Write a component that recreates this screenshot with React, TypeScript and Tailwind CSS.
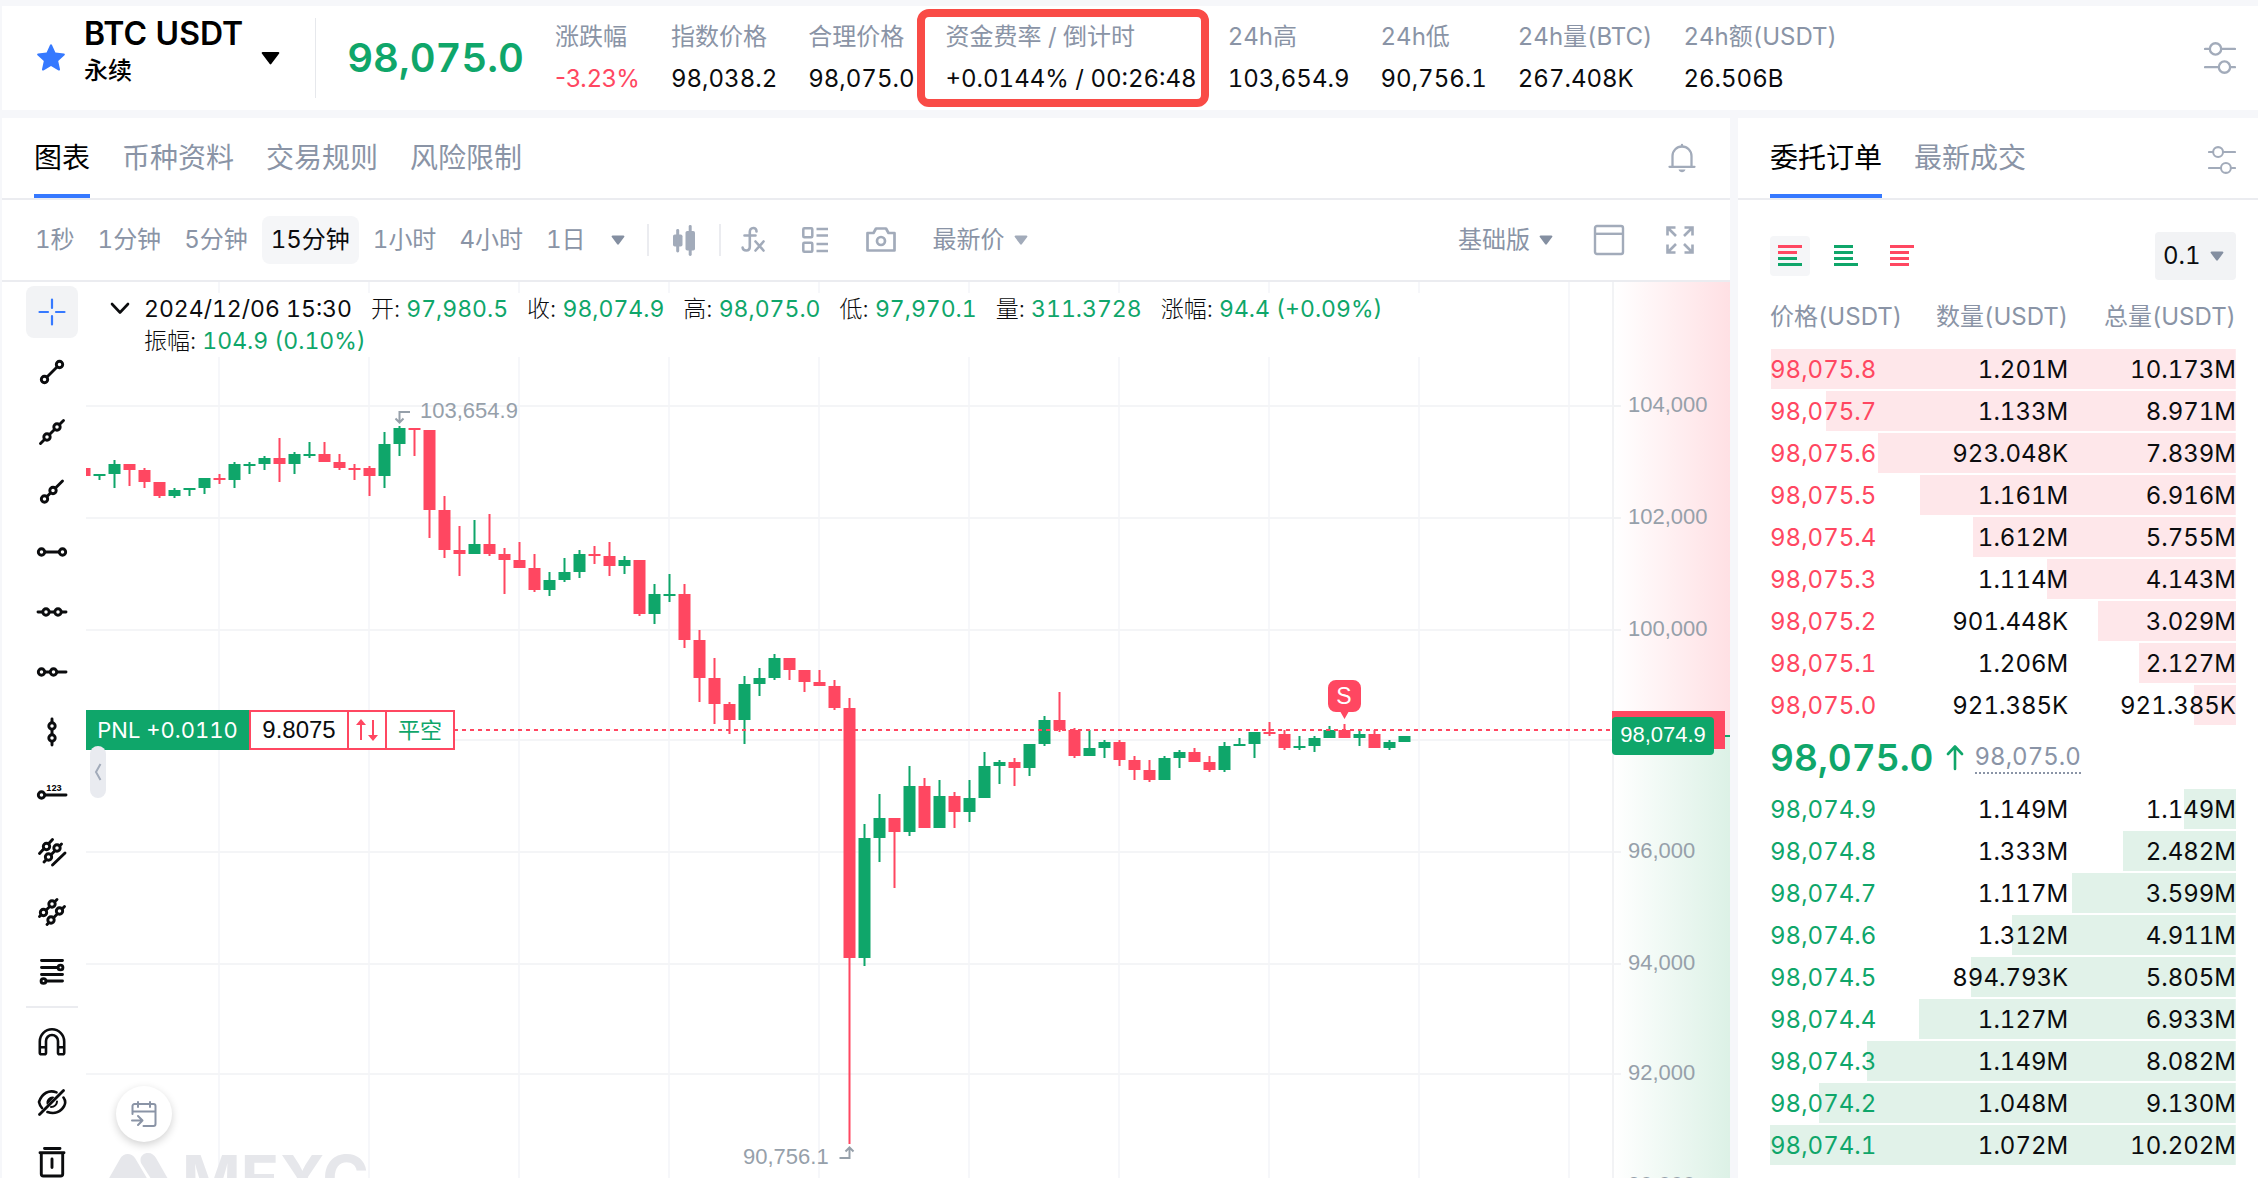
import React from "react";

type Candle = [number, number, number, number, number];

/* [up, high, bodyTop, bodyBottom, low] in chart pixels measured from the top of the window */
const CANDLES: Candle[] = [
  [0, 468, 468, 476, 476], [1, 474, 474, 476, 480], [1, 460, 464, 474, 488], [0, 464, 464, 470, 486],
  [0, 468, 470, 482, 488], [0, 482, 482, 496, 498], [1, 488, 490, 496, 498], [1, 488, 488, 490, 496],
  [1, 478, 478, 488, 494], [0, 474, 478, 480, 484], [1, 462, 464, 480, 488], [1, 462, 464, 466, 474],
  [1, 456, 458, 464, 470], [0, 438, 458, 464, 482], [1, 452, 454, 464, 474], [1, 442, 454, 456, 458],
  [0, 442, 454, 462, 462], [0, 454, 462, 468, 470], [0, 464, 468, 470, 480], [0, 466, 468, 476, 496],
  [1, 432, 444, 476, 488], [1, 426, 428, 444, 456], [0, 428, 428, 430, 456], [0, 430, 430, 510, 538],
  [0, 496, 510, 550, 558], [0, 526, 550, 554, 576], [1, 520, 544, 554, 554], [0, 514, 544, 554, 556],
  [0, 548, 554, 560, 594], [0, 542, 560, 568, 568], [0, 554, 568, 590, 592], [1, 572, 580, 590, 596],
  [1, 558, 572, 580, 582], [1, 550, 554, 572, 578], [0, 546, 554, 556, 564], [0, 542, 556, 566, 576],
  [1, 556, 560, 566, 574], [0, 560, 560, 614, 616], [1, 584, 594, 614, 624], [1, 574, 594, 596, 602],
  [0, 584, 594, 640, 648], [0, 630, 640, 678, 702], [0, 658, 678, 704, 724], [0, 702, 704, 720, 734],
  [1, 676, 684, 720, 744], [1, 668, 678, 684, 696], [1, 654, 658, 678, 680], [0, 658, 658, 670, 680],
  [0, 670, 670, 682, 692], [0, 670, 682, 686, 686], [0, 680, 686, 708, 710], [0, 698, 708, 958, 1144],
  [1, 824, 838, 958, 966], [1, 794, 818, 838, 862], [0, 818, 818, 832, 888], [1, 766, 786, 832, 836],
  [0, 778, 786, 828, 828], [1, 780, 796, 828, 828], [0, 792, 796, 812, 828], [1, 780, 798, 812, 822],
  [1, 752, 766, 798, 798], [1, 760, 762, 766, 784], [0, 758, 762, 768, 786], [1, 744, 744, 768, 776],
  [1, 716, 720, 744, 746], [0, 692, 720, 730, 732], [0, 728, 730, 756, 758], [1, 730, 748, 756, 756],
  [1, 740, 742, 748, 758], [0, 740, 742, 760, 766], [0, 756, 760, 770, 780], [0, 760, 770, 780, 782],
  [1, 756, 758, 780, 780], [1, 750, 752, 758, 768], [0, 748, 752, 762, 762], [0, 756, 762, 770, 772],
  [1, 742, 746, 770, 772], [1, 738, 744, 746, 746], [1, 732, 732, 744, 758], [0, 722, 732, 734, 736],
  [0, 730, 734, 748, 750], [1, 736, 746, 748, 750], [1, 736, 738, 746, 752], [1, 726, 730, 738, 738],
  [0, 724, 730, 738, 738], [1, 730, 734, 738, 746], [0, 730, 734, 748, 748], [1, 740, 742, 748, 750],
  [1, 736, 736, 742, 742],
];

const GRID_X = [219, 369, 519, 669, 819, 969, 1119, 1269, 1419, 1569];
const GRID_Y: [number, string][] = [
  [406, "104,000"], [518, "102,000"], [630, "100,000"], [740, ""],
  [852, "96,000"], [964, "94,000"], [1074, "92,000"], [1186, "90,000"],
];

const UP = "#0fa66a";
const DOWN = "#ff4761";

const STATS: { label: string; value: string; tone?: string; marked?: boolean }[] = [
  { label: "涨跌幅", value: "-3.23%", tone: "text-[#ff4761] proportional-nums" },
  { label: "指数价格", value: "98,038.2" },
  { label: "合理价格", value: "98,075.0" },
  { label: "资金费率 / 倒计时", value: "+0.0144% / 00:26:48", marked: true },
  { label: "24h高", value: "103,654.9" },
  { label: "24h低", value: "90,756.1" },
  { label: "24h量(BTC)", value: "267.408K" },
  { label: "24h额(USDT)", value: "26.506B" },
];

const ASKS = [
  ["98,075.8", "1.201M", "10.173M", 10.173],
  ["98,075.7", "1.133M", "8.971M", 8.971],
  ["98,075.6", "923.048K", "7.839M", 7.839],
  ["98,075.5", "1.161M", "6.916M", 6.916],
  ["98,075.4", "1.612M", "5.755M", 5.755],
  ["98,075.3", "1.114M", "4.143M", 4.143],
  ["98,075.2", "901.448K", "3.029M", 3.029],
  ["98,075.1", "1.206M", "2.127M", 2.127],
  ["98,075.0", "921.385K", "921.385K", 0.921],
] as const;

const BIDS = [
  ["98,074.9", "1.149M", "1.149M", 1.149],
  ["98,074.8", "1.333M", "2.482M", 2.482],
  ["98,074.7", "1.117M", "3.599M", 3.599],
  ["98,074.6", "1.312M", "4.911M", 4.911],
  ["98,074.5", "894.793K", "5.805M", 5.805],
  ["98,074.4", "1.127M", "6.933M", 6.933],
  ["98,074.3", "1.149M", "8.082M", 8.082],
  ["98,074.2", "1.048M", "9.130M", 9.13],
  ["98,074.1", "1.072M", "10.202M", 10.202],
] as const;

const MAX_TOTAL = 10.202;

function Caret({ className = "" }: { className?: string }) {
  return (
    <svg viewBox="0 0 14 10" aria-hidden="true" className={`h-[10px] w-[14px] ${className}`}>
      <path d="M1.6 0.5h10.8a1 1 0 0 1 .8 1.6L8 9a1.2 1.2 0 0 1-2 0L.8 2.1a1 1 0 0 1 .8-1.6z" fill="currentColor" />
    </svg>
  );
}

function Sliders({ className }: { className: string }) {
  return (
    <svg viewBox="0 0 30 30" aria-hidden="true" className={className} fill="none" stroke="currentColor" strokeWidth="2.2" strokeLinecap="round">
      <path d="M1 6.5h4M16.500 6.500H29M1 23.500h12.500M25 23.500h4" />
      <circle cx="10.800" cy="6.500" r="5.300" />
      <circle cx="19.200" cy="23.500" r="5.300" />
    </svg>
  );
}

function Header() {
  return (
    <header className="flex h-[104px] shrink-0 items-center bg-white pr-[22px] pl-[34px]">
      <button type="button" aria-label="收藏" className="text-[#3679ff]">
        <svg viewBox="0 0 30 30" className="size-[30px]" aria-hidden="true">
          <path d="M15 1.200c.5 0 .8.3 1 .7l3.400 7.600 8.500.9c1 .1 1.300 1.100.6 1.800l-6.300 5.700 1.800 8.400c.2.900-.7 1.500-1.500 1.100L15 23.100l-7.500 4.300c-.8.4-1.700-.2-1.500-1.100l1.800-8.400-6.300-5.700c-.7-.7-.4-1.700.6-1.800l8.500-.9L14 1.900c.2-.4.5-.7 1-.7z" fill="currentColor" />
        </svg>
      </button>
      <button type="button" className="ml-[18px] flex items-center text-left text-black">
        <span className="flex flex-col pb-3.5">
          <span className="text-[32px] leading-[40px] font-semibold">BTC USDT</span>
          <span className="text-[24px] leading-[34px] font-medium">永续</span>
        </span>
        <svg viewBox="0 0 20 14" className="ml-[18px] h-[13px] w-[19px]" aria-hidden="true">
          <path d="M1.500 0h17a1 1 0 0 1 .8 1.600L10.800 13a1 1 0 0 1-1.600 0L.7 1.600A1 1 0 0 1 1.500 0z" fill="currentColor" />
        </svg>
      </button>
      <div className="ml-[35px] h-20 w-px bg-[#e6e8ec]" />
      <div className="ml-[31px] text-[40px] leading-[48px] font-semibold text-[#0fa66a]">98,075.0</div>
      <dl className="ml-[31px] flex flex-1 gap-[31px]">
        {STATS.map((s) => (
          <div key={s.label} className="relative flex flex-col text-[24px] leading-[32px] whitespace-nowrap">
            <dt className="text-[#8a94a6]">{s.label}</dt>
            <dd className={`mt-[10px] ${s.tone ?? "text-[#0b0c0e]"}`}>{s.value}</dd>
            {s.marked && (
              <span className="pointer-events-none absolute -inset-y-[12px] right-[-12px] left-[-28px] rounded-xl border-8 border-[#f94b46]" />
            )}
          </div>
        ))}
      </dl>
      <button type="button" aria-label="设置" className="text-[#a2abba]">
        <Sliders className="size-[32px]" />
      </button>
    </header>
  );
}

function Tab({ active, children }: { active?: boolean; children: React.ReactNode }) {
  return (
    <button
      type="button"
      role="tab"
      aria-selected={!!active}
      className={`h-20 border-b-4 pt-[3px] text-[28px] ${active ? "border-[#3679ff] text-black" : "border-transparent text-[#8a94a6]"}`}
    >
      {children}
    </button>
  );
}

const PERIODS = ["1秒", "1分钟", "5分钟", "15分钟", "1小时", "4小时", "1日"];

function Toolbar() {
  return (
    <div className="flex h-[82px] shrink-0 items-center border-b-2 border-[#ebecf0] pr-[35px] pl-[24px] text-[24px] text-[#8a94a6]">
      <div className="flex items-center gap-[5px]">
        {PERIODS.map((p) => (
          <button
            key={p}
            type="button"
            className={`h-12 rounded-lg px-[9px] ${p === "15分钟" ? "bg-[#f5f6f8] text-[#0b0c0e]" : ""}`}
          >
            {p}
          </button>
        ))}
      </div>
      <button type="button" aria-label="更多周期" className="ml-4 flex text-[#848fa1]">
        <Caret />
      </button>
      <div className="ml-[22px] h-8 w-[2px] bg-[#ebecf0]" />
      <button type="button" aria-label="K线样式" className="ml-6 text-[#a2abba]">
        <svg viewBox="0 0 22 32" className="h-8 w-[22px]" aria-hidden="true" fill="currentColor">
          <rect x="0" y="10.500" width="9.500" height="12" rx="1.800" />
          <rect x="3.200" y="5" width="3" height="23.500" rx="1.400" />
          <rect x="12.500" y="7" width="9.500" height="19.500" rx="1.800" />
          <rect x="15.700" y="1" width="3" height="31" rx="1.400" />
        </svg>
      </button>
      <div className="ml-6 h-8 w-[2px] bg-[#ebecf0]" />
      <button type="button" aria-label="指标" className="ml-5 text-[#a2abba]">
        <svg viewBox="0 0 24 28" className="h-7 w-6" aria-hidden="true" fill="none" stroke="currentColor" strokeWidth="2.600" strokeLinecap="round" strokeLinejoin="round">
          <path d="M15.500 5.500C15.500 3.200 14.300 2 12.300 2 10 2 8.800 3.500 8.800 6v14.500c0 2.500-1.200 4-3.500 4S1.800 23.300 1.600 21.600M3.500 9.500h11" />
          <path d="M14.500 15.500l8 9M22.500 15.500l-8 9" />
        </svg>
      </button>
      <button type="button" aria-label="布局" className="ml-9 text-[#a2abba]">
        <svg viewBox="0 0 28 28" className="size-7" aria-hidden="true" fill="none" stroke="currentColor" strokeWidth="2.500">
          <rect x="2.300" y="2.300" width="9" height="9" rx="1" />
          <rect x="2.300" y="16.700" width="9" height="9" rx="1" />
          <path d="M15.500 3H27M15.500 9.500H27M15.500 18H27M15.500 25H27" />
        </svg>
      </button>
      <button type="button" aria-label="截图" className="ml-9 text-[#a2abba]">
        <svg viewBox="0 0 32 28" className="h-7 w-8" aria-hidden="true" fill="none" stroke="currentColor" strokeWidth="2.700" strokeLinejoin="round">
          <path d="M2.500 7h6l2.500-4.500h10L23.500 7h6v17.500h-27z" />
          <circle cx="16" cy="15" r="4" />
        </svg>
      </button>
      <button type="button" className="ml-9 flex items-center gap-[9px]">
        最新价 <Caret className="text-[#a2abba]" />
      </button>
      <button type="button" className="ml-auto flex items-center gap-[9px]">
        基础版 <Caret className="text-[#848fa1]" />
      </button>
      <button type="button" aria-label="窗口" className="ml-10 text-[#a2abba]">
        <svg viewBox="0 0 32 32" className="size-8" aria-hidden="true" fill="none" stroke="currentColor" strokeWidth="2.400">
          <rect x="2" y="2" width="28" height="28" rx="2" />
          <path d="M2 9.800h28" />
        </svg>
      </button>
      <button type="button" aria-label="全屏" className="ml-10 text-[#a2abba]">
        <svg viewBox="0 0 30 30" className="size-[30px]" aria-hidden="true" fill="none" stroke="currentColor" strokeWidth="2.600">
          <path d="M2.500 10.500v-8h8M19.500 2.500h8v8M27.500 19.500v8h-8M10.500 27.500h-8v-8M3 3l8 8M27 3l-8 8M27 27l-8-8M3 27l8-8" />
        </svg>
      </button>
    </div>
  );
}

function ToolButton({ label, active, children }: { label: string; active?: boolean; children: React.ReactNode }) {
  return (
    <button
      type="button"
      aria-label={label}
      className={`flex size-[52px] shrink-0 items-center justify-center rounded-lg ${active ? "bg-[#f2f3f5] text-[#3679ff]" : "text-[#0b0c0e]"}`}
    >
      <svg viewBox="-16 -16 32 32" className="size-8" fill="none" stroke="currentColor" strokeWidth="2.900" strokeLinecap="round" strokeLinejoin="round" aria-hidden="true">
        {children}
      </svg>
    </button>
  );
}

function Nodes({ at, r = 3.2 }: { at: [number, number][]; r?: number }) {
  return (
    <>
      {at.map(([x, y]) => (
        <circle key={`${x},${y}`} cx={x} cy={y} r={r} fill="#fff" />
      ))}
    </>
  );
}

function DrawingTools() {
  return (
    <div className="flex w-[84px] shrink-0 flex-col items-center gap-2 overflow-hidden pt-1 pl-[16px]">
      <ToolButton label="十字光标" active>
        <path d="M-12.500 0h8.500M4 0h8.500M0-12.500v8.500M0 4v8.500" strokeWidth="2.200" />
      </ToolButton>
      <ToolButton label="线段">
        <path d="M-7.500 7.500l15-15" />
        <Nodes at={[[-7.5, 7.5], [7.5, -7.5]]} />
      </ToolButton>
      <ToolButton label="直线">
        <path d="M-11.500 11.500l23-23" />
        <Nodes at={[[-5, 5], [5, -5]]} />
      </ToolButton>
      <ToolButton label="射线">
        <path d="M-7.500 7L10.500-11" />
        <Nodes at={[[-7.5, 7], [1, -1.5]]} />
      </ToolButton>
      <ToolButton label="水平线段">
        <path d="M-10.500 0h21" />
        <Nodes at={[[-10.5, 0], [10.5, 0]]} />
      </ToolButton>
      <ToolButton label="水平直线">
        <path d="M-14 0h28" />
        <Nodes at={[[-6, 0], [6, 0]]} />
      </ToolButton>
      <ToolButton label="水平射线">
        <path d="M-10.500 0H14" />
        <Nodes at={[[-10.5, 0], [1.5, 0]]} />
      </ToolButton>
      <ToolButton label="垂直直线">
        <path d="M0-13v26" />
        <Nodes at={[[0, -6], [0, 6]]} />
      </ToolButton>
      <ToolButton label="价格线">
        <path d="M-10.500 3H14" />
        <Nodes at={[[-10.5, 3]]} />
        <text x="2" y="-1" textAnchor="middle" fontSize="8" fontWeight="800" fill="currentColor" stroke="none">123</text>
      </ToolButton>
      <ToolButton label="价格通道">
        <path d="M-12.500 1.500L0.500-12.500M-8 10L9.500-8M0.500 13L13 1" />
        <Nodes at={[[-5.5, -5.5], [5, -4], [-3.5, 5]]} />
      </ToolButton>
      <ToolButton label="平行直线">
        <path d="M-12.500 4.500L5-12.500M-5 12.500L12.500-5.500" />
        <Nodes at={[[0, -8], [-8.5, 0.5], [7.5, -1], [-1, 8]]} />
      </ToolButton>
      <ToolButton label="斐波那契回调">
        <path d="M-10.500-11.500h21M-10.500-4.500H8M-10.500 2.500h21M-8 9h18.500" />
        <Nodes at={[[8.5, -4.5], [-8.5, 9]]} r={2.4} />
      </ToolButton>
      <div className="h-[2px] w-[52px] shrink-0 bg-[#ebecf0]" />
      <ToolButton label="磁吸">
        <path d="M-12.200 10.700V-.5a12.200 12.200 0 0 1 24.400 0v11.200a1.500 1.500 0 0 1-1.500 1.500H7.500A1.500 1.500 0 0 1 6 10.700V-1A6 6 0 0 0-6-1v11.700a1.500 1.500 0 0 1-1.500 1.500h-3.200a1.500 1.500 0 0 1-1.500-1.500zM-12.200 5.200H-6M6 5.200h6.200" strokeWidth="2.600" />
      </ToolButton>
      <ToolButton label="隐藏">
        <path d="M-12.500 12.500l24-24" strokeWidth="2.800" />
        <path d="M4.500-9.600C-3-12.500-10-9-13 0c.5 2.500 1.500 4.300 3 6M11.500-4.500C14-1 13.800 1 12.200 4 9 9.500 3 12.500-4.500 10" strokeWidth="2.600" />
        <path d="M-5 3A6 6 0 0 1 2.500-5z" fill="currentColor" stroke="none" />
        <path d="M-1 5C2.500 5 5 2.500 5-.5" strokeWidth="2" />
      </ToolButton>
      <ToolButton label="删除">
        <path d="M-7.500-13.500h15.500M-12-9.300h24M-10.700-9v21a2 2 0 0 0 2 2H8.700a2 2 0 0 0 2-2V-9M0-3v8.500" />
      </ToolButton>
    </div>
  );
}

function CandleChart() {
  return (
    <svg className="block h-full w-full" aria-label="BTC USDT K线图" role="img">
      {/* chart space starts at x=86, y=282 */}
      <g transform="translate(-86 -282)">
        {GRID_X.map((x) => (
          <rect key={x} x={x - 1} y="282" width="2" height="2000" fill="#f6f7fa" />
        ))}
        {GRID_Y.map(([y]) => (
          <rect key={y} x="86" y={y - 1} width="4000" height="2" fill="#f4f5f7" />
        ))}
        {CANDLES.map(([up, hi, top, bottom, lo], i) => {
          const c = 84.5 + i * 15;
          return (
            <g key={i} fill={up ? UP : DOWN}>
              <rect x={c - 1} y={hi} width="2" height={lo - hi} />
              <rect x={c - 6} y={top} width="12" height={bottom - top} />
            </g>
          );
        })}
        <path d="M454 730H4000" stroke={DOWN} strokeWidth="2" strokeDasharray="4 4" />
        <g fill="none" stroke="#96a0aa" strokeWidth="2">
          <path d="M410 412h-10.500v10M395.500 418.500l4 4 4-4" />
          <path d="M839.500 1158h10v-10M845.500 1151.500l4-4 4 4" />
        </g>
        <g fill="#96a0aa" fontFamily="Liberation Sans, sans-serif" fontSize="22">
          <text x="420" y="418">103,654.9</text>
          <text x="743" y="1164">90,756.1</text>
        </g>
        <path d="M1336 680h17a8 8 0 0 1 8 8v16a8 8 0 0 1-8 8h-4.500l-4 7-4-7H1336a8 8 0 0 1-8-8v-16a8 8 0 0 1 8-8z" fill={DOWN} />
        <text x="1344" y="704" textAnchor="middle" fill="#fff" fontFamily="Liberation Sans, sans-serif" fontSize="23">S</text>
      </g>
    </svg>
  );
}

function PriceAxis() {
  return (
    <div className="relative flex w-[118px] shrink-0 flex-col border-l-2 border-[#f2f3f5]">
      <div className="h-[455px] shrink-0 bg-linear-to-r from-white to-[#ffe0e4]" />
      <div className="flex-1 bg-linear-to-r from-white to-[#dcf1e6]" />
      <svg className="absolute inset-0 h-full w-full" aria-hidden="true">
        <g transform="translate(-1614 -282)">
          {GRID_Y.map(([y]) => (
            <rect key={y} x="1614" y={y - 1} width="7" height="2" fill="#f2f3f5" />
          ))}
          <g fill="#96a0aa" fontFamily="Liberation Sans, sans-serif" fontSize="22">
            {GRID_Y.map(([y, label]) => (
              <text key={y} x="1628" y={y + 6}>{label}</text>
            ))}
          </g>
          <rect x="1725" y="735" width="8" height="2" fill={UP} />
        </g>
      </svg>
      <div className="absolute top-[429px] -left-[2px] h-[38px] w-[113px] bg-[#ff4761]" />
      <div className="absolute top-[435px] -left-[2px] h-[38px] w-[102px] rounded bg-[#0fa66a] text-center font-['Liberation_Sans',sans-serif] text-[22px] leading-[36px] text-white">
        98,074.9
      </div>
    </div>
  );
}

const OHLC: [string, string][] = [
  ["开", "97,980.5"], ["收", "98,074.9"], ["高", "98,075.0"], ["低", "97,970.1"],
  ["量", "311.3728"], ["涨幅", "94.4 (+0.09%)"], ["振幅", "104.9 (0.10%)"],
];

function Legend() {
  return (
    <div className="absolute top-[11px] left-6 flex max-w-[1340px] items-start text-[23px] leading-[32px] text-[#0b0c0e]">
      <button type="button" aria-label="收起" className="flex h-8 w-[34px] shrink-0 items-center">
        <svg viewBox="0 0 20 14" className="h-[14px] w-5" fill="none" stroke="currentColor" strokeWidth="2.600" strokeLinecap="round" strokeLinejoin="round" aria-hidden="true">
          <path d="M2 2l8 8.500L18 2" />
        </svg>
      </button>
      <div className="flex flex-wrap gap-x-[19px] bg-white">
        <span>2024/12/06 15:30</span>
        {OHLC.map(([k, v]) => (
          <span key={k} className="whitespace-nowrap">
            <span className="font-light">{k}: </span>
            <span className="text-[#0fa66a]">{v}</span>
          </span>
        ))}
      </div>
    </div>
  );
}

function PositionLine() {
  return (
    <div className="absolute top-[428px] left-0 flex h-10 items-stretch text-[22px]">
      <span className="flex w-[163px] items-center justify-center bg-[#0fa66a] text-white">PNL +0.0110</span>
      <span className="flex w-[100px] items-center justify-center border-2 border-[#ff4761] bg-white font-['Liberation_Sans',sans-serif] text-[24px] text-[#0b0c0e]">
        9.8075
      </span>
      <button type="button" aria-label="反手" className="-ml-[2px] flex w-10 items-center justify-center border-2 border-[#ff4761] bg-white text-[#ff4761]">
        <svg viewBox="0 0 22 22" className="size-[22px]" aria-hidden="true">
          <path d="M4 6h2v15H4zM5 0l5 6H0zM16 1h2v15h-2zM17 22l-5-6h10z" fill="currentColor" />
        </svg>
      </button>
      <button type="button" className="-ml-[2px] w-[70px] border-2 border-[#ff4761] bg-white text-[#0fa66a]">
        平空
      </button>
    </div>
  );
}

function ChartPanel() {
  return (
    <section className="flex min-w-0 flex-1 flex-col bg-white">
      <div className="flex h-[82px] shrink-0 items-start justify-between border-b-2 border-[#ebecf0] pr-[33px] pl-8">
        <div role="tablist" className="flex gap-8">
          <Tab active>图表</Tab>
          <Tab>币种资料</Tab>
          <Tab>交易规则</Tab>
          <Tab>风险限制</Tab>
        </div>
        <button type="button" aria-label="提醒" className="flex h-20 items-center text-[#a2abba]">
          <svg viewBox="0 0 30 30" className="size-[30px]" aria-hidden="true" fill="none" stroke="currentColor" strokeWidth="2.300" strokeLinecap="round">
            <path d="M2.500 23.800h25M5.500 23.500V13a9.500 9.500 0 0 1 19 0v10.500" />
            <path d="M15 3.300V2" />
            <path d="M11.500 26.500h7c-.6 1.800-1.900 2.700-3.500 2.700s-2.900-.9-3.500-2.700z" fill="currentColor" stroke="none" />
          </svg>
        </button>
      </div>
      <Toolbar />
      <div className="flex min-h-0 flex-1">
        <DrawingTools />
        <div className="relative min-w-0 flex-1 overflow-hidden">
          <div className="absolute top-[866px] left-[22px] flex h-[80px] items-start text-[#e6e7eb]">
            <svg viewBox="0 0 60 40" className="mt-[5px] h-10 w-[60px]" aria-hidden="true" fill="currentColor">
              <path d="M0 27L12 6C15 0 23-1 27 5L40 27V40H0z" />
              <path d="M33 10C31 4 35 0 40 0c4 0 6 2 8 5L60 26V40H52z" />
            </svg>
            <span className="ml-[14px] text-[63px] leading-[60px] font-bold">MEXC</span>
          </div>
          <CandleChart />
          <Legend />
          <PositionLine />
          <button type="button" aria-label="收起工具栏" className="absolute top-[464px] left-1 flex h-[52px] w-4 items-center justify-center rounded-lg bg-[#e9ebf0] text-[#a2abba]">
            <svg viewBox="0 0 8 18" className="h-[18px] w-2" fill="none" stroke="currentColor" strokeWidth="2" aria-hidden="true">
              <path d="M6.500 1L2 9l4.500 8" />
            </svg>
          </button>
          <button type="button" aria-label="跳转日期" className="absolute top-[804px] left-[30px] flex size-14 items-center justify-center rounded-full bg-white text-[#8a94a6] shadow-[0_3px_8px_rgba(0,0,0,0.18)]">
            <svg viewBox="0 0 26 26" className="size-[26px]" fill="none" stroke="currentColor" strokeWidth="2" strokeLinecap="round" strokeLinejoin="round" aria-hidden="true">
              <path d="M1.500 13V5a2 2 0 0 1 2-2h19a2 2 0 0 1 2 2v18a2 2 0 0 1-2 2H12.500M1.500 10.500h23M7 1v5M19 1v5M1 19.500h10.500M7 15l4.500 4.500L7 24" />
            </svg>
          </button>
        </div>
        <PriceAxis />
      </div>
    </section>
  );
}

function BookIcon({ rows, label, active }: { rows: [string, number][]; label: string; active?: boolean }) {
  return (
    <button type="button" aria-label={label} className={`flex size-10 items-center justify-center rounded ${active ? "bg-[#f5f6f8]" : ""}`}>
      <svg viewBox="0 0 24 24" className="size-6" aria-hidden="true">
        {rows.map(([color, w], i) => (
          <rect key={i} x="0" y={i * 6 + 1} width={w} height="3" fill={color} />
        ))}
      </svg>
    </button>
  );
}

function BookRow({ row, side }: { row: readonly [string, string, string, number]; side: "ask" | "bid" }) {
  const tone = side === "ask" ? "text-[#ff4761]" : "text-[#0fa66a]";
  const bar = side === "ask" ? "bg-[linear-gradient(#fee7ea,#fee7ea)]" : "bg-[linear-gradient(#e1f2e9,#e1f2e9)]";
  return (
    <tr className={`h-10 bg-right bg-no-repeat ${bar}`} style={{ backgroundSize: `${(row[3] / MAX_TOTAL) * 100}% 100%` }}>
      <td className={`pt-[2px] text-left ${tone}`}>{row[0]}</td>
      <td className="pt-[2px] text-right">{row[1]}</td>
      <td className="pt-[2px] text-right">{row[2]}</td>
    </tr>
  );
}

function OrderBook() {
  return (
    <section className="flex w-[520px] shrink-0 flex-col bg-white">
      <div className="flex h-[82px] shrink-0 items-start justify-between border-b-2 border-[#ebecf0] pr-[22px] pl-8">
        <div role="tablist" className="flex gap-8">
          <Tab active>委托订单</Tab>
          <Tab>最新成交</Tab>
        </div>
        <button type="button" aria-label="盘口设置" className="flex h-[84px] items-center text-[#a2abba]">
          <Sliders className="size-7" />
        </button>
      </div>
      <div className="flex flex-col pt-8 pr-[22px] pl-8">
        <div className="flex items-center justify-between">
          <div className="flex gap-4">
            <BookIcon label="默认盘口" active rows={[[DOWN, 24], [DOWN, 19], [UP, 19], [UP, 24]]} />
            <BookIcon label="买盘" rows={[[UP, 19], [UP, 19], [UP, 19], [UP, 24]]} />
            <BookIcon label="卖盘" rows={[[DOWN, 24], [DOWN, 19], [DOWN, 19], [DOWN, 19]]} />
          </div>
          <div className="relative flex items-center">
            <select aria-label="价格精度" defaultValue="0.1" className="h-12 w-[81px] appearance-none rounded bg-[#f2f3f5] pl-2 text-[24px] text-[#0b0c0e]">
              <option>0.1</option>
            </select>
            <Caret className="pointer-events-none absolute right-3 text-[#848fa1]" />
          </div>
        </div>
        <table className="mt-[5px] w-full table-fixed border-separate border-spacing-x-0 border-spacing-y-[2px] text-[24px] leading-[32px] text-[#0b0c0e]">
          <thead>
            <tr className="h-[60px] text-[#8a94a6]">
              <th className="w-[32%] text-left font-normal">价格(USDT)</th>
              <th className="w-[32%] text-right font-normal">数量(USDT)</th>
              <th className="w-[36%] text-right font-normal">总量(USDT)</th>
            </tr>
          </thead>
          <tbody>
            {ASKS.map((r) => (
              <BookRow key={r[0]} row={r} side="ask" />
            ))}
            <tr className="h-[60px]">
              <td colSpan={3} className="pt-[2px]">
                <div className="flex items-center">
                  <span className="text-[37px] leading-[44px] font-semibold text-[#0fa66a]">98,075.0</span>
                  <svg viewBox="0 0 18 26" className="ml-3 h-[26px] w-[18px] text-[#0fa66a]" fill="none" stroke="currentColor" strokeWidth="2.600" strokeLinecap="round" strokeLinejoin="round" aria-hidden="true">
                    <path d="M9 24V2M2 9l7-7.500L16 9" />
                  </svg>
                  <a href="#mark" className="ml-[11px] border-b-2 border-dotted border-[#8a94a6] leading-[30px] text-[#8a94a6]">98,075.0</a>
                </div>
              </td>
            </tr>
            {BIDS.map((r) => (
              <BookRow key={r[0]} row={r} side="bid" />
            ))}
          </tbody>
        </table>
      </div>
    </section>
  );
}

export default function App() {
  return (
    <div className="flex h-screen flex-col gap-2 overflow-hidden bg-[#f6f7fa] pt-[6px] pl-[2px] font-[Inter,'Noto_Sans_CJK_SC',sans-serif] tabular-nums">
      <Header />
      <main className="flex min-h-0 flex-1 gap-2">
        <ChartPanel />
        <OrderBook />
      </main>
    </div>
  );
}
